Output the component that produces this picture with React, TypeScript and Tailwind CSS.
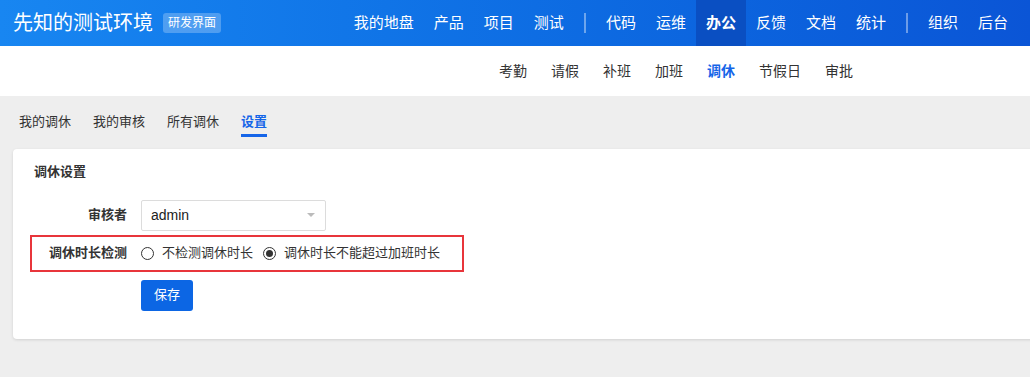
const font = { fontFamily: '"Liberation Sans", "Noto Sans CJK SC", sans-serif' };

const mainNav = [
  ["我的地盘", "产品", "项目", "测试"],
  ["代码", "运维", "办公", "反馈", "文档", "统计"],
  ["组织", "后台"],
];

const subNav = ["考勤", "请假", "补班", "加班", "调休", "节假日", "审批"];
const tabs = ["我的调休", "我的审核", "所有调休", "设置"];

function Radio({ checked, label }: { checked?: boolean; label: string }) {
  return (
    <label className="flex items-center gap-[8px]">
      <span className="flex h-[13px] w-[13px] items-center justify-center rounded-full border border-[#333] bg-white">
        {checked && <span className="h-[7px] w-[7px] rounded-full bg-[#333]" />}
      </span>
      <span className="text-[13px] text-[#333]">{label}</span>
    </label>
  );
}

export default function App() {
  return (
    <div className="h-[377px] w-[1030px] overflow-hidden bg-[#eeeeee]" style={font}>
      {/* top bar */}
      <div className="flex h-[46px] items-center bg-gradient-to-r from-[#1886f1] to-[#0b55d6] pl-[13px] pr-[12px] text-white">
        <span className="text-[20px] leading-none">先知的测试环境</span>
        <span className="ml-[10px] rounded-[3px] bg-white/25 px-[5px] py-[3px] text-[12px] leading-[14px]">
          研发界面
        </span>
        <nav className="ml-auto flex h-full items-center">
          {mainNav.map((group, gi) => (
            <div key={gi} className="flex h-full items-center">
              {gi > 0 && <span className="mx-[10px] h-[20px] w-[2px] bg-white/40" />}
              {group.map((item) => (
                <span
                  key={item}
                  className={`flex h-full items-center px-[10px] text-[15px] ${
                    item === "办公" ? "bg-[#0a4fc2] font-bold" : ""
                  }`}
                >
                  {item}
                </span>
              ))}
            </div>
          ))}
        </nav>
      </div>

      {/* sub nav */}
      <div className="flex h-[50px] items-center gap-[24px] bg-white pl-[499px] text-[14px] text-[#333]">
        {subNav.map((item) => (
          <span key={item} className={item === "调休" ? "font-bold text-[#1565e8]" : ""}>
            {item}
          </span>
        ))}
      </div>

      {/* tabs */}
      <div className="flex gap-[22px] pl-[19px] pt-[18px] text-[13px] text-[#333]">
        {tabs.map((t) => (
          <span
            key={t}
            className={`pb-[5px] leading-[15px] ${
              t === "设置" ? "border-b-[3px] border-[#1565e8] font-bold text-[#1565e8]" : "border-b-[3px] border-transparent"
            }`}
          >
            {t}
          </span>
        ))}
      </div>

      {/* card */}
      <div className="ml-[13px] mt-[12px] h-[190px] w-[1040px] rounded-[4px] bg-white pl-[18px] pt-[13px] shadow-[0_1px_3px_rgba(0,0,0,0.12)]">
        <div className="pl-[3px] text-[13px] font-bold text-[#333]">调休设置</div>

        <div className="mt-[18px] flex items-center">
          <span className="w-[96px] text-right text-[13px] font-bold text-[#333]">审核者</span>
          <div className="ml-[14px] flex h-[31px] w-[185px] items-center justify-between rounded-[2px] border border-[#dcdcdc] px-[9px] text-[14px] text-[#222]">
            <span>admin</span>
            <span className="mr-[1px] h-0 w-0 border-x-[4px] border-t-[4px] border-x-transparent border-t-[#bbb]" />
          </div>
        </div>

        <div className="relative mt-[4px] flex h-[37px] items-center">
          <span className="w-[96px] text-right text-[13px] font-bold text-[#333]">调休时长检测</span>
          <div className="ml-[14px] flex items-center gap-[10px]">
            <Radio label="不检测调休时长" />
            <Radio checked label="调休时长不能超过加班时长" />
          </div>
          <div className="absolute left-[-1px] top-0 h-[37px] w-[434px] border-2 border-[#e8353b]" />
        </div>

        <button className="ml-[110px] mt-[8px] h-[31px] w-[52px] rounded-[3px] bg-[#0c66e4] text-[13px] text-white">
          保存
        </button>
      </div>
    </div>
  );
}
